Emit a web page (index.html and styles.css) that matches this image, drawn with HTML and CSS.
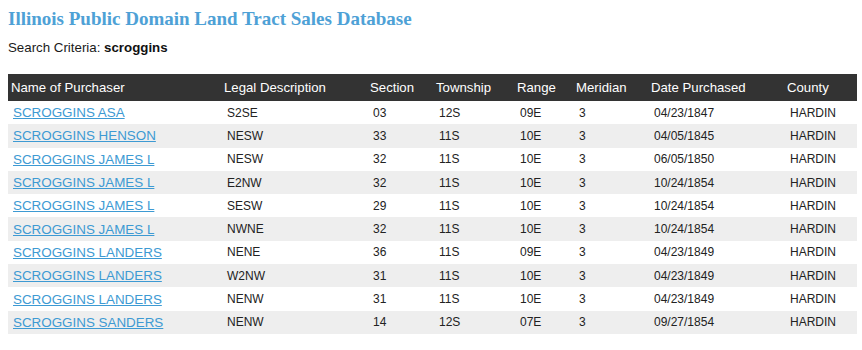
FILE: index.html
```html
<!DOCTYPE html>
<html>
<head>
<meta charset="utf-8">
<link rel="stylesheet" href="styles.css">
</head>
<body>
<h1 class="title">Illinois Public Domain Land Tract Sales Database</h1>
<p class="criteria">Search Criteria: <b>scroggins</b></p>
<table class="results">
<colgroup>
<col class="c-name"><col class="c-legal"><col class="c-sec"><col class="c-town"><col class="c-range"><col class="c-mer"><col class="c-date"><col class="c-county">
</colgroup>
<thead>
<tr><th>Name of Purchaser</th><th>Legal Description</th><th>Section</th><th>Township</th><th>Range</th><th>Meridian</th><th>Date Purchased</th><th>County</th></tr>
</thead>
<tbody>
<tr><td class="name"><a href="#">SCROGGINS ASA</a></td><td>S2SE</td><td>03</td><td>12S</td><td>09E</td><td>3</td><td>04/23/1847</td><td>HARDIN</td></tr>
<tr><td class="name"><a href="#">SCROGGINS HENSON</a></td><td>NESW</td><td>33</td><td>11S</td><td>10E</td><td>3</td><td>04/05/1845</td><td>HARDIN</td></tr>
<tr><td class="name"><a href="#">SCROGGINS JAMES L</a></td><td>NESW</td><td>32</td><td>11S</td><td>10E</td><td>3</td><td>06/05/1850</td><td>HARDIN</td></tr>
<tr><td class="name"><a href="#">SCROGGINS JAMES L</a></td><td>E2NW</td><td>32</td><td>11S</td><td>10E</td><td>3</td><td>10/24/1854</td><td>HARDIN</td></tr>
<tr><td class="name"><a href="#">SCROGGINS JAMES L</a></td><td>SESW</td><td>29</td><td>11S</td><td>10E</td><td>3</td><td>10/24/1854</td><td>HARDIN</td></tr>
<tr><td class="name"><a href="#">SCROGGINS JAMES L</a></td><td>NWNE</td><td>32</td><td>11S</td><td>10E</td><td>3</td><td>10/24/1854</td><td>HARDIN</td></tr>
<tr><td class="name"><a href="#">SCROGGINS LANDERS</a></td><td>NENE</td><td>36</td><td>11S</td><td>09E</td><td>3</td><td>04/23/1849</td><td>HARDIN</td></tr>
<tr><td class="name"><a href="#">SCROGGINS LANDERS</a></td><td>W2NW</td><td>31</td><td>11S</td><td>10E</td><td>3</td><td>04/23/1849</td><td>HARDIN</td></tr>
<tr><td class="name"><a href="#">SCROGGINS LANDERS</a></td><td>NENW</td><td>31</td><td>11S</td><td>10E</td><td>3</td><td>04/23/1849</td><td>HARDIN</td></tr>
<tr><td class="name"><a href="#">SCROGGINS SANDERS</a></td><td>NENW</td><td>14</td><td>12S</td><td>07E</td><td>3</td><td>09/27/1854</td><td>HARDIN</td></tr>
</tbody>
</table>
</body>
</html>
```
FILE: styles.css
```css
html, body { background: #ffffff; }
body {
  margin: 0;
  padding: 8px 8px 0 8px;
  font-family: "Liberation Sans", Arial, sans-serif;
  font-size: 13px;
  color: #1a1a1a;
}
.title {
  margin: 0;
  padding-top: 1px;
  font-family: "Liberation Serif", Georgia, serif;
  font-weight: bold;
  font-size: 19px;
  line-height: 20px;
  color: #4ea1d6;
}
.criteria {
  margin: 11px 0 0 0;
  line-height: 15px;
  font-size: 13.3px;
}
.criteria b { color: #111; }
.results {
  margin-top: 19px;
  width: 849px;
  border-collapse: collapse;
  table-layout: fixed;
}
.c-name { width: 213px; }
.c-legal { width: 146px; }
.c-sec { width: 66px; }
.c-town { width: 81px; }
.c-range { width: 59px; }
.c-mer { width: 75px; }
.c-date { width: 136px; }
.c-county { width: 73px; }
.results th {
  background: #333333;
  color: #ffffff;
  font-weight: normal;
  text-align: left;
  height: 27px;
  padding: 0 0 0 3px;
  font-size: 13.2px;
}
.results td {
  height: 23.3px;
  padding: 0 0 0 6px;
  color: #222;
  font-size: 12px;
}
.results td.name { padding-left: 5px; font-size: 13.4px; }
.results tbody tr:nth-child(even) td { background: #eeeeee; }
.results a { color: #3d9ad3; text-decoration: underline; }
```
